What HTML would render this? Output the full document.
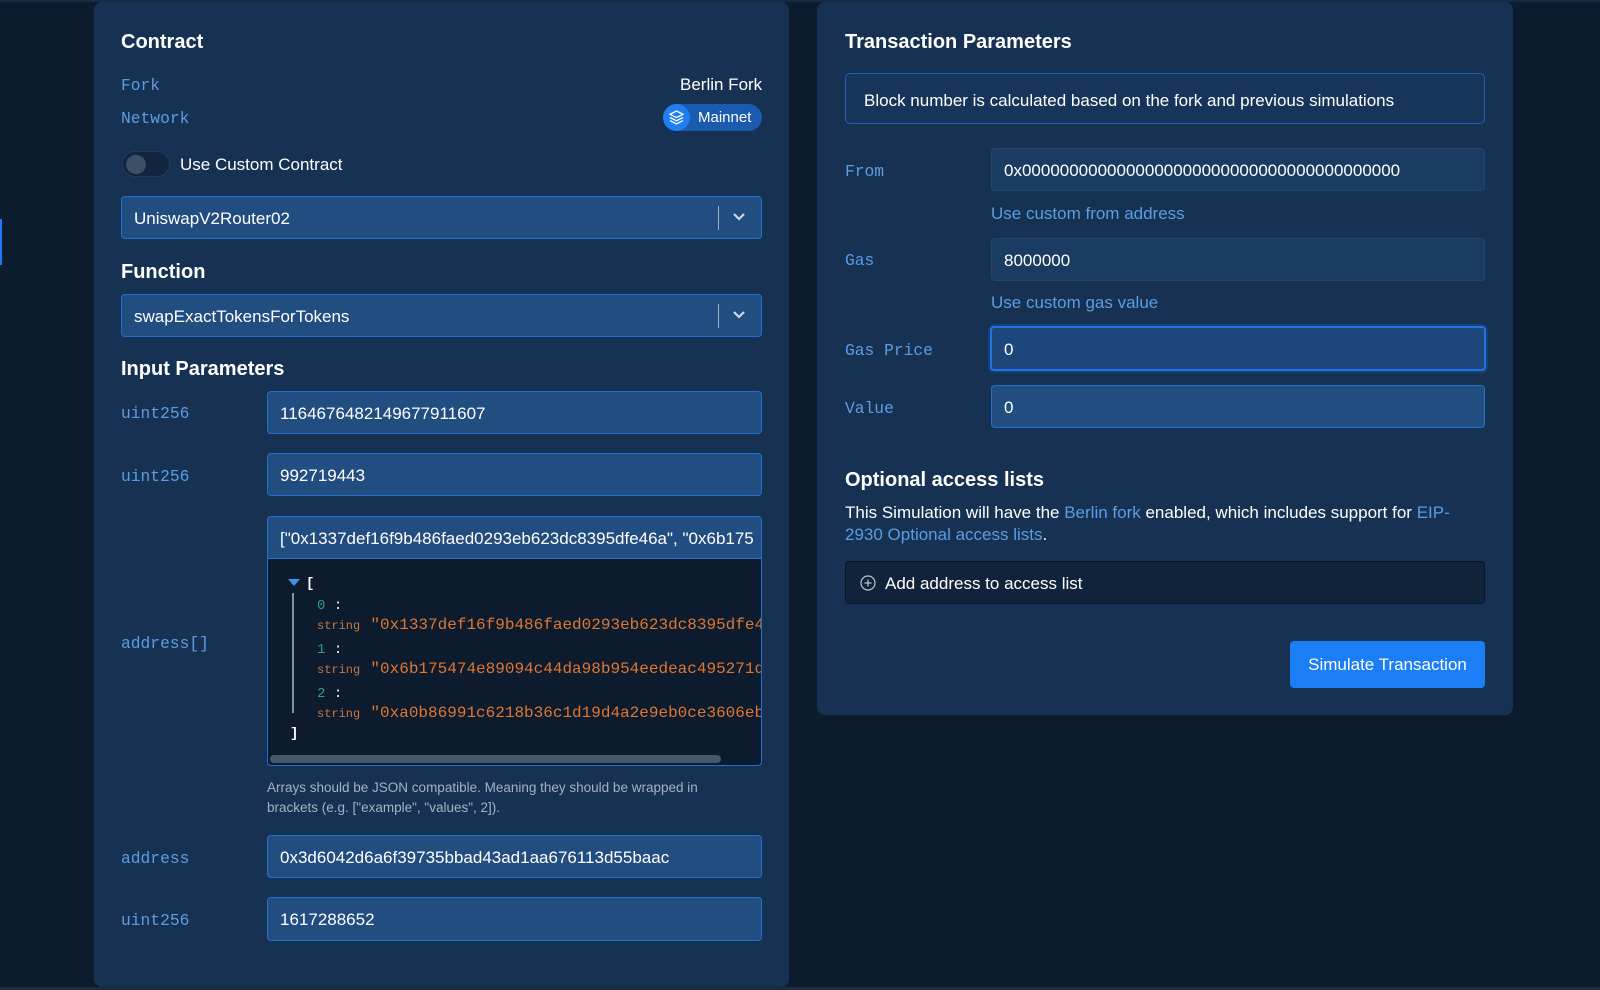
<!DOCTYPE html>
<html><head><meta charset="utf-8">
<style>
*{box-sizing:border-box;margin:0;padding:0}
body{width:1600px;height:990px;background:#0c1c2e;position:relative;overflow:hidden;font-family:"Liberation Sans",sans-serif;color:#fff;font-size:17px}
.abs{position:absolute}
.panel{position:absolute;background:#163152;border-radius:8px}
.h{position:absolute;font-weight:bold;font-size:20px;color:#fff}
.lab{position:absolute;font-family:"Liberation Mono",monospace;font-size:16.3px;color:#5b9de3}
.inp{position:absolute;background:#214d80;border:1px solid #2170d0;border-radius:4px;padding-left:12px;padding-top:2px;display:flex;align-items:center;font-size:17px;color:#fff;white-space:nowrap;overflow:hidden}
.dis{background:#1a3b62;border-color:#21466f}
.link{color:#5b9de3}
.json{font-family:"Liberation Mono",monospace}
</style></head><body>
<div class="abs" style="left:0;top:0;width:1600px;height:2px;background:#162a42"></div>
<div class="abs" style="left:0;top:987px;width:1600px;height:3px;background:#1e2b3b"></div>
<div class="abs" style="left:0;top:219px;width:2px;height:46px;background:#1c7cf0"></div>

<div class="panel" style="left:94px;top:2px;width:695px;height:985px"></div>
<div class="panel" style="left:817px;top:2px;width:696px;height:713px"></div>

<!-- left -->
<div class="h" style="left:121px;top:31px">Contract</div>
<div class="lab" style="left:121px;top:76px">Fork</div>
<div class="abs" style="left:680px;top:75px;font-size:17px">Berlin Fork</div>
<div class="lab" style="left:121px;top:109px">Network</div>
<div class="abs" style="left:663px;top:104px;width:99px;height:27px;border-radius:14px;background:#1a5bb0"></div>
<div class="abs" style="left:663px;top:104px;width:27px;height:27px;border-radius:14px;background:#1f7ef0"></div>
<svg class="abs" style="left:668px;top:109px" width="17" height="17" viewBox="0 0 17 17" fill="none" stroke="#fff" stroke-width="1.3"><path d="M8.5 2L15 5.3 8.5 8.6 2 5.3z"/><path d="M2 8.5l6.5 3.3 6.5-3.3"/><path d="M2 11.6l6.5 3.3 6.5-3.3"/></svg>
<div class="abs" style="left:698px;top:109px;font-size:15px">Mainnet</div>
<div class="abs" style="left:122px;top:151px;width:48px;height:26px;border-radius:13px;background:#11253e;border:1px solid #213b5a"></div>
<div class="abs" style="left:126px;top:155px;width:20px;height:19px;border-radius:50%;background:#3b4f66"></div>
<div class="abs" style="left:180px;top:155px">Use Custom Contract</div>

<div class="inp" style="left:121px;top:196px;width:641px;height:43px">UniswapV2Router02</div>
<div class="abs" style="left:718px;top:206px;width:1px;height:24px;background:#9fb3c8"></div>
<svg class="abs" style="left:732px;top:212px" width="14" height="10" viewBox="0 0 14 10"><path d="M2 2l5 5 5-5" stroke="#cfd9e4" stroke-width="2.2" fill="none"/></svg>

<div class="h" style="left:121px;top:261px">Function</div>
<div class="inp" style="left:121px;top:294px;width:641px;height:43px">swapExactTokensForTokens</div>
<div class="abs" style="left:718px;top:304px;width:1px;height:24px;background:#9fb3c8"></div>
<svg class="abs" style="left:732px;top:310px" width="14" height="10" viewBox="0 0 14 10"><path d="M2 2l5 5 5-5" stroke="#cfd9e4" stroke-width="2.2" fill="none"/></svg>

<div class="h" style="left:121px;top:358px">Input Parameters</div>
<div class="lab" style="left:121px;top:404px">uint256</div>
<div class="inp" style="left:267px;top:391px;width:495px;height:43px">1164676482149677911607</div>
<div class="lab" style="left:121px;top:467px">uint256</div>
<div class="inp" style="left:267px;top:453px;width:495px;height:43px">992719443</div>
<div class="lab" style="left:121px;top:634px">address[]</div>
<div class="inp" style="left:267px;top:516px;width:495px;height:43px;border-radius:4px 4px 0 0">["0x1337def16f9b486faed0293eb623dc8395dfe46a", "0x6b175</div>
<div class="abs" style="left:267px;top:559px;width:495px;height:207px;background:#0c1b2d;border:1px solid #2170d0;border-top:none;border-radius:0 0 4px 4px;overflow:hidden">
 <svg class="abs" style="left:20px;top:20px" width="12" height="8"><path d="M0 0h12L6 7z" fill="#3d95e6"/></svg>
 <div class="abs json" style="left:38px;top:17px;font-size:14px;font-weight:bold">[</div>
 <div class="abs" style="left:24px;top:34px;width:2px;height:120px;background:#8792a0"></div>
 <div class="abs json" style="left:49px;top:39px;font-size:14px;color:#2aa189">0 <span style="color:#fff">:</span></div>
 <div class="abs json" style="left:49px;top:57px;white-space:nowrap;color:#e07630"><span style="font-size:12px;color:#c37840">string</span> <span style="font-size:16px">"0x1337def16f9b486faed0293eb623dc8395dfe46a"</span></div>
 <div class="abs json" style="left:49px;top:83px;font-size:14px;color:#2aa189">1 <span style="color:#fff">:</span></div>
 <div class="abs json" style="left:49px;top:101px;white-space:nowrap;color:#e07630"><span style="font-size:12px;color:#c37840">string</span> <span style="font-size:16px">"0x6b175474e89094c44da98b954eedeac495271d0f"</span></div>
 <div class="abs json" style="left:49px;top:127px;font-size:14px;color:#2aa189">2 <span style="color:#fff">:</span></div>
 <div class="abs json" style="left:49px;top:145px;white-space:nowrap;color:#e07630"><span style="font-size:12px;color:#c37840">string</span> <span style="font-size:16px">"0xa0b86991c6218b36c1d19d4a2e9eb0ce3606eb48"</span></div>
 <div class="abs json" style="left:22px;top:167px;font-size:14px;font-weight:bold">]</div>
 <div class="abs" style="left:2px;top:196px;width:451px;height:8px;border-radius:4px;background:#47586a"></div>
</div>
<div class="abs" style="left:267px;top:778px;width:480px;font-size:13.5px;line-height:19.5px;color:#a3b3c4">Arrays should be JSON compatible. Meaning they should be wrapped in brackets (e.g. ["example", "values", 2]).</div>
<div class="lab" style="left:121px;top:849px">address</div>
<div class="inp" style="left:267px;top:835px;width:495px;height:43px">0x3d6042d6a6f39735bbad43ad1aa676113d55baac</div>
<div class="lab" style="left:121px;top:911px">uint256</div>
<div class="inp" style="left:267px;top:897px;width:495px;height:44px">1617288652</div>

<!-- right -->
<div class="h" style="left:845px;top:31px">Transaction Parameters</div>
<div class="abs" style="left:845px;top:73px;width:640px;height:51px;border:1px solid #1d63b8;border-radius:5px;background:#17355a;padding:17px 0 0 18px">Block number is calculated based on the fork and previous simulations</div>
<div class="lab" style="left:845px;top:162px">From</div>
<div class="inp dis" style="left:991px;top:148px;width:494px;height:43px">0x0000000000000000000000000000000000000000</div>
<div class="abs link" style="left:991px;top:204px">Use custom from address</div>
<div class="lab" style="left:845px;top:251px">Gas</div>
<div class="inp dis" style="left:991px;top:238px;width:494px;height:43px">8000000</div>
<div class="abs link" style="left:991px;top:293px">Use custom gas value</div>
<div class="lab" style="left:845px;top:341px">Gas Price</div>
<div class="inp" style="left:990px;top:326px;width:496px;height:45px;background:#1d477a;border:2px solid #1e74e6;box-shadow:0 0 0 2px #173f72">0</div>
<div class="lab" style="left:845px;top:399px">Value</div>
<div class="inp" style="left:991px;top:385px;width:494px;height:43px">0</div>

<div class="h" style="left:845px;top:469px">Optional access lists</div>
<div class="abs" style="left:845px;top:502px;width:640px;line-height:22px">This Simulation will have the <span class="link">Berlin fork</span> enabled, which includes support for <span class="link">EIP-2930 Optional access lists</span>.</div>
<div class="abs" style="left:845px;top:561px;width:640px;height:43px;background:#11233b;border:1px solid #0a1626;border-radius:4px"></div>
<svg class="abs" style="left:860px;top:575px" width="16" height="16" viewBox="0 0 16 16" fill="none" stroke="#b9c5d2" stroke-width="1.2"><circle cx="8" cy="8" r="7"/><path d="M8 4.5v7M4.5 8h7"/></svg>
<div class="abs" style="left:885px;top:574px">Add address to access list</div>
<div class="abs" style="left:1290px;top:641px;width:195px;height:47px;background:#1b7ef5;border-radius:4px;display:flex;align-items:center;justify-content:center">Simulate Transaction</div>
</body></html>
